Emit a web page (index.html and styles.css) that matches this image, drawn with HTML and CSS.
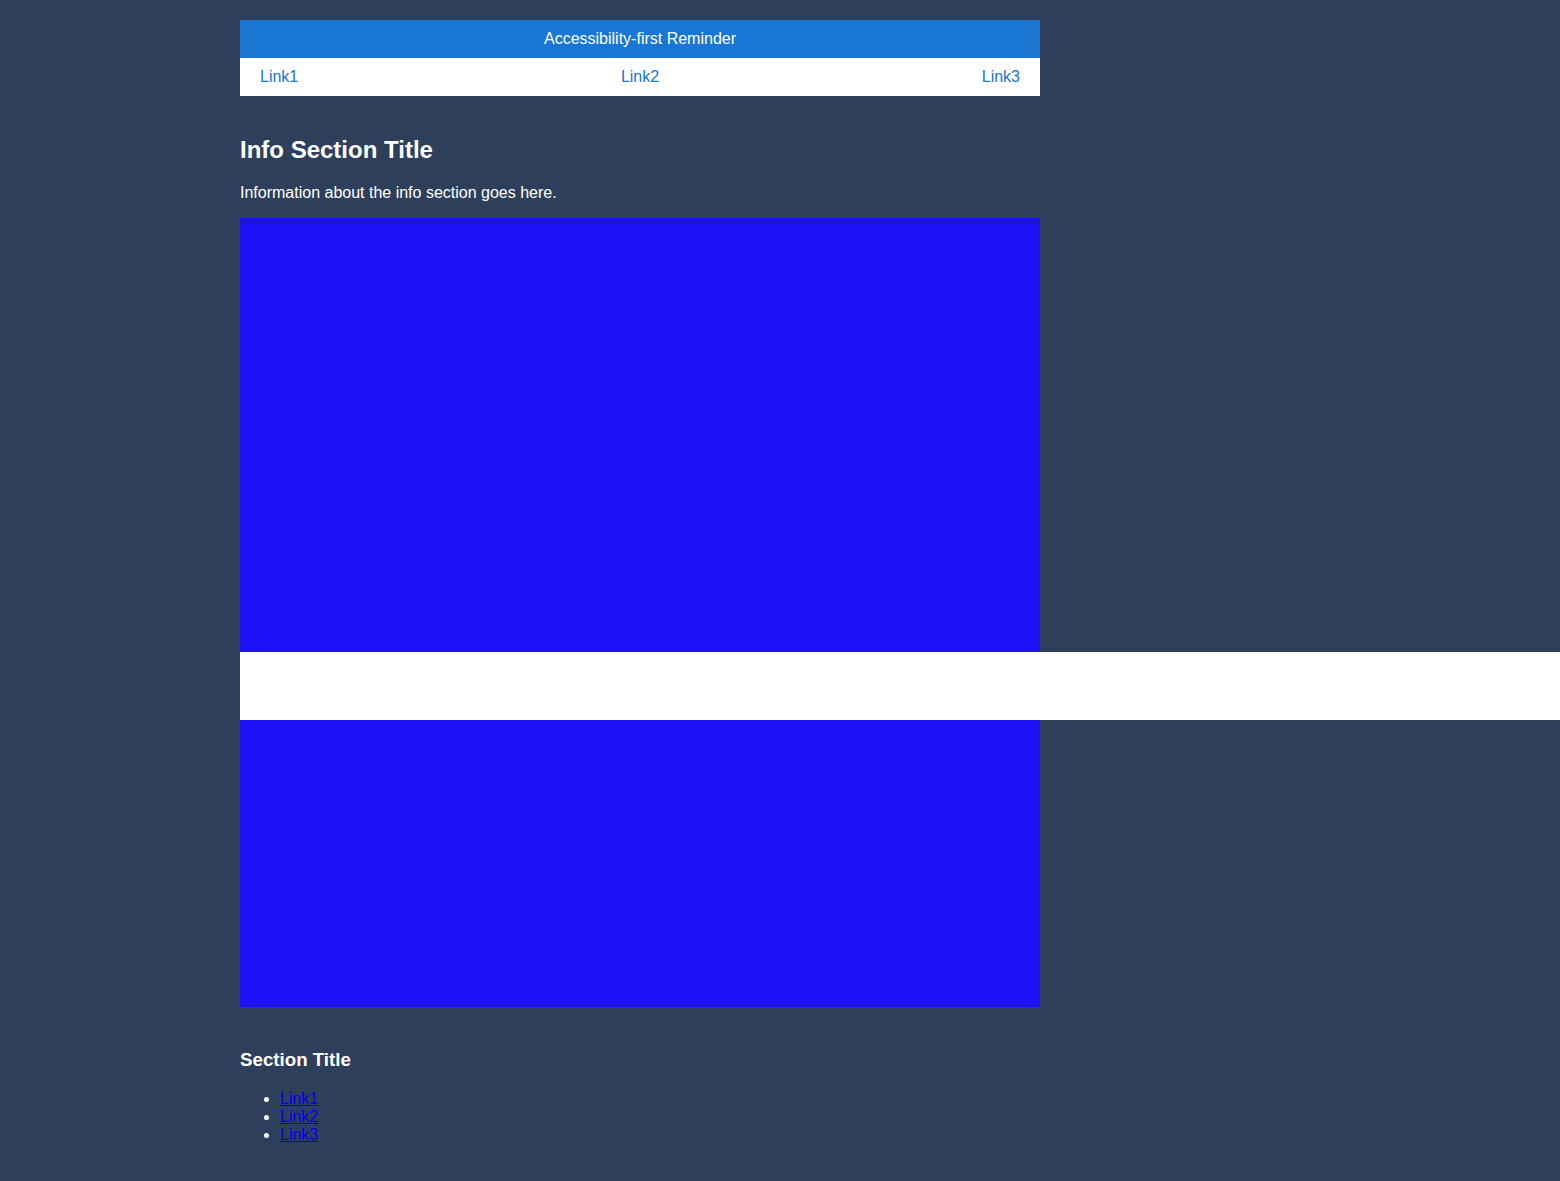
FILE: index.html
```html
<!DOCTYPE html>
<html lang="en">
<head>
<meta charset="utf-8">
<title>Accessibility-first Reminder</title>
<link rel="stylesheet" href="styles.css">
</head>
<body>
<div class="page">
  <header class="banner">Accessibility-first Reminder</header>
  <nav class="nav">
    <a href="#">Link1</a>
    <a href="#">Link2</a>
    <a href="#">Link3</a>
  </nav>
  <main class="info">
    <h2 class="info-title">Info Section Title</h2>
    <p class="info-text">Information about the info section goes here.</p>
    <div class="media">
      <div class="overlay-band"></div>
    </div>
  </main>
  <footer class="footer">
    <h3 class="footer-title">Section Title</h3>
    <ul class="footer-list">
      <li><a href="#">Link1</a></li>
      <li><a href="#">Link2</a></li>
      <li><a href="#">Link3</a></li>
    </ul>
  </footer>
</div>
</body>
</html>
```
FILE: styles.css
```css
html, body {
  margin: 0;
  padding: 0;
}
body {
  background: #2e3f5b;
  color: #ffffff;
  font-family: "Liberation Sans", Arial, sans-serif;
  font-size: 16px;
  overflow-x: hidden;
}
.page {
  width: 800px;
  margin-left: 240px;
  padding-top: 20px;
}
.banner {
  background: #1976d2;
  color: #ffffff;
  height: 38px;
  line-height: 38px;
  text-align: center;
}
.nav {
  background: #ffffff;
  height: 38px;
  display: flex;
  justify-content: space-between;
  align-items: center;
  padding: 0 20px;
}
.nav a {
  color: #1976d2;
  text-decoration: none;
}
.info {
  padding-top: 20px;
}
.info-title {
  font-size: 24px;
  font-weight: bold;
  margin: 20px 0;
}
.info-text {
  margin: 0 0 16px;
}
.media {
  position: relative;
  height: 789px;
  background: #1e10f7;
}
.overlay-band {
  position: absolute;
  top: 434px;
  left: 0;
  height: 68px;
  width: calc(100vw - 240px);
  background: #ffffff;
}
.footer {
  padding-top: 23px;
  padding-bottom: 20px;
}
.footer-title {
  font-size: 18.72px;
  font-weight: bold;
  margin: 19px 0;
}
.footer-list {
  margin: 0;
  padding-left: 40px;
  line-height: 18px;
}
.footer-list a {
  color: #0000ee;
}
```
